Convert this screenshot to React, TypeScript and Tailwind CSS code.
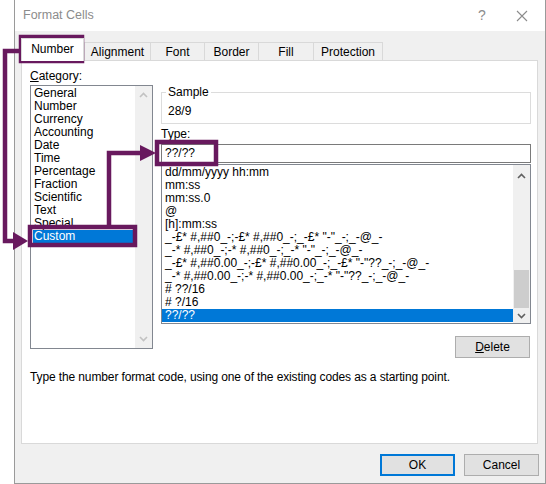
import React from 'react'

const categories = [
  'General', 'Number', 'Currency', 'Accounting', 'Date', 'Time',
  'Percentage', 'Fraction', 'Scientific', 'Text', 'Special', 'Custom',
]

const formats = [
  'dd/mm/yyyy hh:mm',
  'mm:ss',
  'mm:ss.0',
  '@',
  '[h]:mm:ss',
  '_-£* #,##0_-;-£* #,##0_-;_-£* "-"_-;_-@_-',
  '_-* #,##0_-;-* #,##0_-;_-* "-"_-;_-@_-',
  '_-£* #,##0.00_-;-£* #,##0.00_-;_-£* "-"??_-;_-@_-',
  '_-* #,##0.00_-;-* #,##0.00_-;_-* "-"??_-;_-@_-',
  '# ??/16',
  '# ?/16',
  '??/??',
]

const tabs = [
  { label: 'Alignment', w: 'w-[66px]' },
  { label: 'Font', w: 'w-[54px]' },
  { label: 'Border', w: 'w-[54px]' },
  { label: 'Fill', w: 'w-[55px]' },
  { label: 'Protection', w: 'w-[70px] border-r' },
]

function Chevron({ up, color }: { up?: boolean; color: string }) {
  return (
    <svg width="9" height="6" viewBox="0 0 9 6">
      <polyline
        points={up ? '1,5 4.5,1.5 8,5' : '1,1 4.5,4.5 8,1'}
        fill="none"
        stroke={color}
        strokeWidth="1.6"
      />
    </svg>
  )
}

export default function App() {
  return (
    <div className="relative w-[546px] h-[484px] bg-white overflow-hidden font-['Liberation_Sans',Arial,sans-serif] text-[12px] text-black">
      <div className="ml-[14px] w-[532px] h-[484px] border border-t-0 border-[#9a9a9a] bg-[#f0f0f0] flex flex-col">
        {/* title bar */}
        <div className="h-[31px] bg-white flex items-center pl-[8px] text-[#8c8c8c]">
          <span className="flex-1 text-[12.5px]">Format Cells</span>
          <span className="w-[20px] text-center text-[14px] mr-[24px]">?</span>
          <svg width="12" height="12" viewBox="0 0 12 12" className="mr-[17px]">
            <path d="M1 1 L11 11 M11 1 L1 11" stroke="#8c8c8c" strokeWidth="1.1" />
          </svg>
        </div>

        <div className="pt-[7px] pl-[6px]">
          {/* tabs */}
          <div className="flex items-end h-[22px]">
            <div className="relative z-10 w-[63px] h-[23px] -mb-[1px] bg-white border border-b-0 border-[#d9d9d9] flex items-center justify-center pb-[2px]">
              Number
            </div>
            {tabs.map((t) => (
              <div
                key={t.label}
                className={`${t.w} h-[18px] border-t border-l border-[#d9d9d9] flex items-center justify-center`}
              >
                {t.label}
              </div>
            ))}
          </div>

          {/* panel */}
          <div className="w-[517px] h-[384px] bg-white border border-[#d9d9d9]">
            <div className="flex">
              {/* category column */}
              <div className="ml-[8px] w-[123px] pt-[7px]">
                <div className="h-[16px] leading-[16px]">
                  <span className="underline">C</span>ategory:
                </div>
                <div className="mt-[1px] h-[264px] border border-[#828790] flex">
                  <div className="flex-1 pt-[1px]">
                    {categories.map((c) => (
                      <div
                        key={c}
                        className={`ml-[2px] pl-[1px] h-[13px] leading-[13px] ${
                          c === 'Custom' ? 'bg-[#0078d7] text-white' : ''
                        }`}
                      >
                        {c}
                      </div>
                    ))}
                  </div>
                  <div className="w-[17px] bg-[#f0f0f0] flex flex-col items-center justify-between pt-[6px] pb-[6px]">
                    <Chevron up color="#c2c2c2" />
                    <Chevron color="#c2c2c2" />
                  </div>
                </div>
              </div>

              {/* type column */}
              <div className="ml-[8px] w-[370px] pt-[23px] flex flex-col">
                <fieldset className="h-[40px] border border-[#dcdcdc]">
                  <legend className="ml-[4px] px-[2px] leading-[16px]">Sample</legend>
                  <div className="pl-[6px] pt-[4px] leading-[15px]">28/9</div>
                </fieldset>
                <div className="mt-[3px] h-[15px] leading-[15px]">Type:</div>
                <div className="mt-[2px] h-[19px] border border-[#7a7a7a] pl-[3px] leading-[17px]">??/??</div>
                <div className="mt-[1px] h-[160px] border border-[#828790] flex">
                  <div className="flex-1 pt-[1px]">
                    {formats.map((f) => (
                      <div
                        key={f}
                        className={`pl-[3px] h-[13px] leading-[13px] whitespace-pre ${
                          f === '??/??' ? 'bg-[#0078d7] text-white' : ''
                        }`}
                      >
                        {f}
                      </div>
                    ))}
                  </div>
                  <div className="w-[17px] bg-[#f0f0f0] flex flex-col items-center pt-[8px] pb-[4px]">
                    <Chevron up color="#606060" />
                    <div className="flex-1" />
                    <div className="w-[15px] h-[38px] bg-[#cdcdcd] mb-[5px]" />
                    <Chevron color="#606060" />
                  </div>
                </div>
                <div className="mt-[12px] flex justify-end pr-[1px]">
                  <button className="w-[75px] h-[22px] border border-[#adadad] bg-[#e1e1e1] leading-[20px]">
                    <span className="underline">D</span>elete
                  </button>
                </div>
              </div>
            </div>
            <div className="mt-[12px] pl-[8px] leading-[15px] tracking-[-0.12px]">
              Type the number format code, using one of the existing codes as a starting point.
            </div>
          </div>

          {/* dialog buttons */}
          <div className="mt-[10px] flex justify-end gap-[9px] pr-[6px]">
            <button className="w-[75px] h-[22px] border-2 border-[#0078d7] bg-[#e1e1e1]">OK</button>
            <button className="w-[75px] h-[22px] border border-[#adadad] bg-[#e1e1e1]">Cancel</button>
          </div>
        </div>
      </div>

      {/* annotation overlay */}
      <svg className="absolute left-0 top-0 pointer-events-none" width="546" height="484" viewBox="0 0 546 484">
        <g fill="none" stroke="#68195e" strokeWidth="4.5">
          <rect x="21" y="37" width="61" height="24" />
          <rect x="30" y="227" width="105" height="18" />
          <rect x="157" y="142" width="59" height="22" />
          <polyline points="19,51 5,51 5,241 15,241" strokeLinejoin="miter" />
          <polyline points="109,225 109,153 142,153" strokeLinejoin="miter" />
        </g>
        <g fill="#68195e">
          <polygon points="13,232 28,241 13,250" />
          <polygon points="140,145 156,153 140,161" />
        </g>
      </svg>
    </div>
  )
}
